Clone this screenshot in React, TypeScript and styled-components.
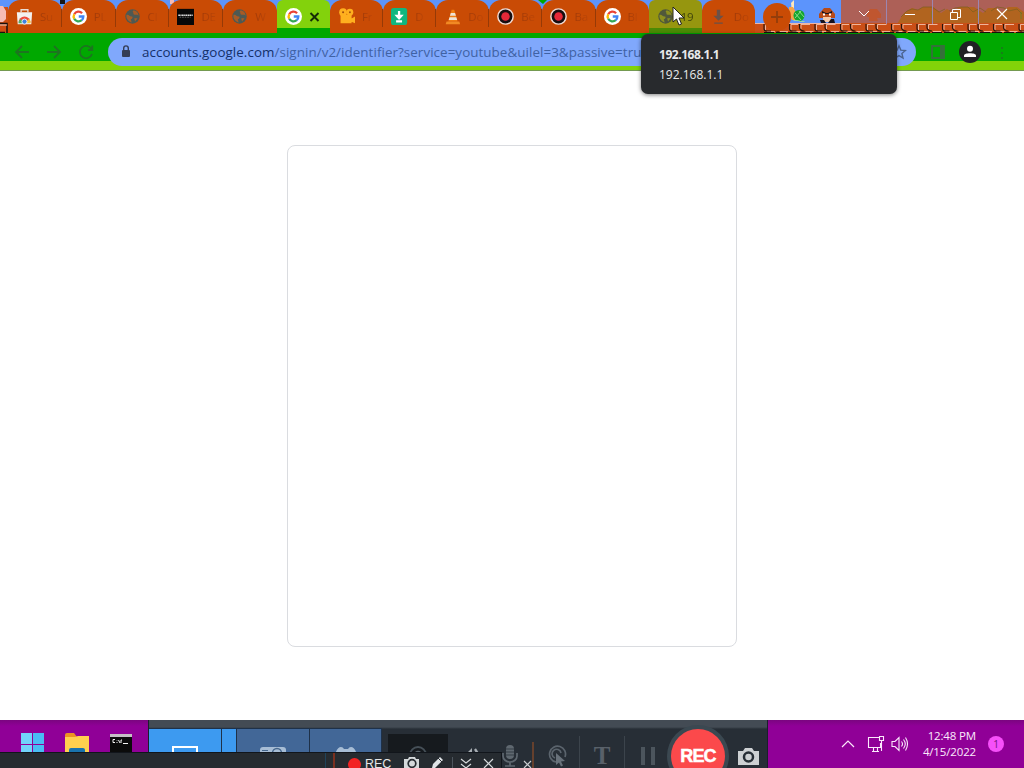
import React from "react";
import styled, { createGlobalStyle } from "styled-components";

const Global = createGlobalStyle`
  * { box-sizing: border-box; }
  body { margin: 0; overflow: hidden; font-family: "Open Sans", "Noto Sans", sans-serif; }
`;

const Screen = styled.div`
  position: relative;
  width: 1024px;
  height: 768px;
  overflow: hidden;
  display: flex;
  flex-direction: column;
  background: #fff;
`;

/* ---------- browser frame ---------- */
const TabStrip = styled.header`
  position: relative;
  flex: none;
  height: 33px;
  display: flex;
  background: #5c94fc;
`;
const Scenery = styled.svg`
  position: absolute;
  inset: 0;
`;
const Tabs = styled.div`
  position: relative;
  display: flex;
  width: 755px;
  padding-left: 8px;
`;
type Kind = "plain" | "active" | "hover";
const fills: Record<Kind, string> = {
  plain: "#c94b05",
  active: "linear-gradient(#83d20c 28px, #00a800 28px)",
  hover: "linear-gradient(#96960f 28px, #4b8a05 28px)",
};
const Tab = styled.div<{ $kind: Kind; $line: boolean; $w: number }>`
  position: relative;
  flex: none;
  width: ${(p) => p.$w}px;
  height: 33px;
  display: flex;
  align-items: center;
  gap: 7px;
  padding-left: 8px;
  white-space: nowrap;
  border-radius: ${(p) => (p.$kind === "plain" ? "12px 12px 0 0" : "6px 6px 0 0")};
  background: ${(p) => fills[p.$kind]};
  &::after {
    content: "";
    display: ${(p) => (p.$line ? "block" : "none")};
    position: absolute;
    right: 0;
    top: 9px;
    width: 1px;
    height: 18px;
    background: #963a07;
  }
`;
const Favicon = styled.svg`
  flex: none;
  width: 17px;
  height: 17px;
`;
const TabTitle = styled.span<{ $strong?: boolean }>`
  font-size: 11.5px;
  letter-spacing: -0.2px;
  line-height: 16px;
  color: transparent;
  background: ${(p) => (p.$strong ? "#3f430b" : "linear-gradient(90deg, #9f3a09, #bd4607)")};
  background-clip: text;
  -webkit-background-clip: text;
`;
const NewTab = styled.div`
  position: relative;
  display: grid;
  place-items: center;
  width: 28px;
  height: 28px;
  margin: 3px 0 0 8px;
  border-radius: 50%;
  background: #c94b05;
`;
const WindowButtons = styled.div`
  position: relative;
  display: flex;
  width: 183px;
  height: 24px;
  margin-left: auto;
`;
const WindowButton = styled.div<{ $w: number }>`
  width: ${(p) => p.$w}px;
  display: grid;
  place-items: center;
  padding-top: 4px;
  border-right: 1px solid #9c86b0;
  &:last-child { border: 0; }
`;

const Toolbar = styled.nav`
  flex: none;
  height: 38px;
  display: flex;
  align-items: center;
  border-bottom: 1px solid #749a51;
  background: linear-gradient(#00a800 28px, #82d309 28px);
`;
const NavButtons = styled.div`
  display: flex;
  width: 108px;
  padding-left: 14px;
  gap: 16px;
`;
const AddressBar = styled.div`
  width: 808px;
  height: 28px;
  display: flex;
  align-items: center;
  padding: 0 9px 0 12px;
  border-radius: 14px;
  background: #80a8fc;
`;
const Url = styled.div`
  flex: 1;
  margin-left: 10px;
  white-space: nowrap;
  font-size: 13.4px;
  letter-spacing: 0.06px;
  line-height: 20px;
  color: #3f62a4;
  b { font-weight: 400; color: #13306a; }
`;
const ToolbarEnd = styled.div`
  display: flex;
  align-items: center;
  margin-left: 14px;
  gap: 13px;
`;

const Tooltip = styled.div`
  position: absolute;
  left: 641px;
  top: 34px;
  width: 256px;
  height: 60px;
  padding: 11px 18px;
  border-radius: 7px;
  background: #282a2d;
  box-shadow: 0 1px 4px rgba(0, 0, 0, 0.5);
  color: #e8e9eb;
  font-size: 12px;
  line-height: 20px;
  strong { display: block; font-weight: 700; letter-spacing: -0.45px; }
`;
const Pointer = styled.svg`
  position: absolute;
  left: 672px;
  top: 6px;
`;

/* ---------- page ---------- */
const Page = styled.main`
  flex: 1;
  display: flex;
  justify-content: center;
  align-items: flex-start;
  padding-top: 74px;
`;
const LoginCard = styled.section`
  width: 450px;
  height: 502px;
  border: 1px solid #dadce0;
  border-radius: 8px;
`;

/* ---------- taskbar ---------- */
const Taskbar = styled.footer`
  flex: none;
  height: 48px;
  display: flex;
  background: linear-gradient(#7b0580, #900097 6px);
`;
const Launchers = styled.div`
  flex: none;
  width: 148px;
  display: flex;
  padding: 13px 0 0 21px;
  gap: 21px;
`;
const Recorder = styled.div`
  flex: none;
  width: 620px;
  display: flex;
  border: solid #19202b;
  border-width: 0 1px;
  background: linear-gradient(#434b54 7px, #272e36 9px);
`;
const Mode = styled.div<{ $w: number; $on?: boolean }>`
  flex: none;
  width: ${(p) => p.$w}px;
  height: 40px;
  margin-top: 8px;
  display: flex;
  justify-content: center;
  padding-top: 17px;
  border: solid #1e3149;
  border-width: 1px 1px 0 0;
  background: ${(p) => (p.$on ? "#3d9af0" : "#426797")};
`;
const WebcamSlot = styled.div`
  flex: none;
  width: 60px;
  height: 35px;
  margin: 14px 0 0 6px;
  padding-top: 11px;
  display: flex;
  justify-content: center;
  background: #161a1e;
`;
const Tool = styled.div<{ $w: number; $line?: boolean }>`
  flex: none;
  width: ${(p) => p.$w}px;
  height: 32px;
  margin-top: 16px;
  display: flex;
  align-items: center;
  justify-content: center;
  padding-top: 7px;
  border-right: ${(p) => (p.$line ? "1px solid #3c444c" : "0")};
  font: 700 25px/30px "Liberation Serif", serif;
  color: #59616a;
`;
const RecordButton = styled.div`
  flex: none;
  width: 54px;
  height: 54px;
  margin: 9px 0 0;
  display: grid;
  place-items: center;
  border-radius: 50%;
  background: #fb494b;
  box-shadow: 0 0 0 4px #3b4851;
  font: 700 18px/24px "Liberation Sans", sans-serif;
  -webkit-text-stroke: 0.5px #fff;
  letter-spacing: -0.9px;
  color: #fff;
`;
const Tray = styled.div`
  flex: 1;
  display: flex;
  align-items: center;
  padding-left: 73px;
  color: #fbe9fc;
`;
const DisplayIcon = styled.svg`
  margin-left: 12px;
`;
const SpeakerIcon = styled.svg`
  margin-left: 6px;
`;
const Clock = styled.div`
  width: 56px;
  margin-left: 11px;
  text-align: right;
  white-space: nowrap;
  font-size: 11.5px;
  letter-spacing: -0.15px;
  line-height: 16px;
`;
const Notice = styled.div`
  width: 16px;
  height: 16px;
  margin-left: 12px;
  border-radius: 50%;
  background: #f650f9;
  color: #74127a;
  font-size: 10px;
  line-height: 16px;
  text-align: center;
`;
const MiniBar = styled.div`
  position: absolute;
  left: 0;
  top: 752px;
  width: 502px;
  height: 16px;
  display: flex;
  align-items: flex-start;
  padding-left: 325px;
  border: solid #11151b;
  border-width: 1px 1px 0 0;
  background: #262b30;
`;
const MiniGrip = styled.div`
  width: 10px;
  height: 15px;
  margin-right: 13px;
  border-left: 1px solid #20435a;
  border-right: 2px solid #7b3020;
`;
const MiniDot = styled.div`
  width: 13px;
  height: 13px;
  margin-top: 5px;
  border-radius: 50%;
  background: #f22323;
`;
const MiniLabel = styled.div`
  width: 39px;
  margin: 4px 0 0 4px;
  font: 12.5px/14px "Liberation Sans", sans-serif;
  color: #e5e6e7;
`;
const PenOff = styled.svg`
  position: absolute;
  left: 523px;
  top: 760px;
`;

const G = () => (
  <>
    <circle cx="10" cy="10" r="10" fill="#fff" />
    <g fill="none" strokeWidth="2.7">
      <path d="M14.2 6.2A5.7 5.7 0 0 0 5 7.3" stroke="#ea4335" />
      <path d="M5 7.3a5.7 5.7 0 0 0 0 5.4" stroke="#fbbc05" />
      <path d="M5 12.7a5.7 5.7 0 0 0 8.8 1.7" stroke="#34a853" />
      <path d="M13.8 14.4a5.7 5.7 0 0 0 1.9-4.4H10.3" stroke="#4285f4" />
    </g>
  </>
);
const Globe = () => (
  <>
    <circle cx="10" cy="10" r="8.5" fill="#4d5953" />
    <path d="M3 8c3-1 3 2 6 2 2 0 1 3-1 3l1 4C5 16 2 12 3 8zM11 3c-2 2 1 2 0 4 2 2 4 0 6 2 0-4-3-6-6-6zM12 12h4l-3 4z" fill="#a65b26" />
  </>
);
const HoverGlobe = () => (
  <>
    <circle cx="10" cy="10" r="8.5" fill="#50583a" />
    <path d="M3 8c3-1 3 2 6 2 2 0 1 3-1 3l1 4C5 16 2 12 3 8zM11 3c-2 2 1 2 0 4 2 2 4 0 6 2 0-4-3-6-6-6zM12 12h4l-3 4z" fill="#8c9020" />
  </>
);
const icons: Record<string, React.ReactNode> = {
  store: (
    <>
      <path d="M6 5V2h8v3" fill="none" stroke="#e8dcd5" strokeWidth="1.6" />
      <path d="M1 5h18l-1 14H2z" fill="#f3f1ef" />
      <path d="M3 17a7 7 0 0 1 14 0z" fill="#ed4b3c" />
      <path d="M3 18a7 7 0 0 1 2-5l5 5z" fill="#4caf68" />
      <path d="M11 18l4-5q3 2 2 5z" fill="#f3c43a" />
      <circle cx="10" cy="16" r="3" fill="#3e82e0" stroke="#fff" />
    </>
  ),
  google: <G />,
  globe: <Globe />,
  hoverGlobe: <HoverGlobe />,
  black: (
    <>
      <rect width="20" height="19" y="1" fill="#080808" />
      <path d="M1.500 8.500h17" stroke="#d9d9d9" strokeWidth="1.600" strokeDasharray="2 .5 1.500 .4" />
      <path d="M3 10.800h13" stroke="#777" strokeWidth="1" strokeDasharray="2 1" />
    </>
  ),
  camera: (
    <g fill="#ffb01f">
      <circle cx="6" cy="5" r="4.6" /><circle cx="14" cy="5" r="4" />
      <path d="M3 8h13v10H3zM15 13l5-3v8l-5-2z" />
      <circle cx="6" cy="5" r="1.2" fill="#a24d0b" /><circle cx="14" cy="5" r="1.1" fill="#a24d0b" />
    </g>
  ),
  save: (
    <>
      <rect width="19" height="20" rx="3" fill="#10b77f" />
      <path d="M9.500 3.500v5M6 15.800h7" fill="none" stroke="#fff" strokeWidth="2.700" />
      <path d="M4 8h11l-5.500 6z" fill="#fff" />
    </>
  ),
  cone: (
    <>
      <path d="M9 2h3l4 14H5z" fill="#ef7d13" />
      <path d="M8 6h5l1 3H7zM6.500 11h8l1 3H5.500z" fill="#eee2d8" />
      <path d="M3 16h15l1 3H2z" fill="#f18a24" />
    </>
  ),
  record: (
    <>
      <circle cx="10" cy="10" r="9" fill="#170e10" stroke="#f1dcd4" strokeWidth="1.700" />
      <circle cx="10" cy="10" r="5" fill="#e52838" />
    </>
  ),
  download: (
    <path d="M8 2h4v7h4l-6 6-6-6h4zM5 17h10v1.500H5z" fill="#6a5148" />
  ),
};

const tabs: { icon: string; title: string; kind?: Kind }[] = [
  { icon: "store", title: "Su" },
  { icon: "google", title: "PL" },
  { icon: "globe", title: "Cl" },
  { icon: "black", title: "DE" },
  { icon: "globe", title: "W" },
  { icon: "google", title: "", kind: "active" },
  { icon: "camera", title: "Fr" },
  { icon: "save", title: "D" },
  { icon: "cone", title: "Do" },
  { icon: "record", title: "Be" },
  { icon: "record", title: "Ba" },
  { icon: "google", title: "Bl" },
  { icon: "hoverGlobe", title: "19", kind: "hover" },
  { icon: "download", title: "Do" },
];

const bricks = Array.from({ length: 11 }, (_, i) => 764 + i * 25.5);

const FrameScenery = () => (
  <Scenery width="1024" height="33">
    <rect x="0" y="7" width="8" height="26" fill="#ce4d12" />
    <path d="M0 6h3l3 5v8l-3 3H0z" fill="#f6bbb5" />
    <path d="M0 23.500h7V33M0 32.500h5" stroke="#17100d" strokeWidth="1.500" fill="none" />
    <path d="M0 25h7" stroke="#f1cfc4" />
    <rect x="60" width="5" height="4" fill="#171717" />
    <rect x="170" width="4" height="4" fill="#f6bbb5" />
    <path d="M538 0h9l-4 4z" fill="#00a800" />
    <rect x="841" width="183" height="24" fill="#ad6057" />
    <path d="M897 24l7-11 8-5 6 2 5-3h10l8 6 6-4 5 3 8-5h14l9 6 5-5h8l6 4 6-5h9l7 5v12z" fill="#b1641f" />
    <g fill="none" stroke="#7b5f1e" strokeOpacity=".7">
      <path d="M901 17l6-6 5-2 6 1 5-3h9l7 5 6-3M949 11l6-3 6-1h7l5 5 7-4 6 4M991 11l6-4 7 1 5 3 8-2 5 5" />
      <path d="M932 11v7M978 11v7M1021 12v7" stroke="#5b8c2b" />
    </g>
    <rect x="755" y="23" width="269" height="10" fill="#c94e16" />
    <path d="M755 23.500h86" stroke="#efb7a5" />
    {bricks.map((x) => (
      <g key={x} fill="none">
        <path d={`M${x + 1.5} 31v-6.500h7M${x + 11.5} 29v-4.500h9M${x + 3} 31.500h8m5 0h8`} stroke="#f3bfa9" strokeWidth=".9" />
        <path d={`M${x} 24v5q0 2 3 2h4M${x + 10} 24v4q1 3 5 3`} stroke="#26130c" strokeWidth="1.100" />
      </g>
    ))}
    <path d="M764 32.500h260" stroke="#17100c" strokeDasharray="10 2" />
    <path d="M791 3l3-3v8l-2 4z" fill="#ffe7ba" />
    <path d="M789 7h4l3 5v8h-4l-3-6z" fill="#f5a34a" />
    <circle cx="799" cy="15.500" r="5.500" fill="#13a52f" />
    <path d="M795 13l6 7M801 11l-6 7M799 11l5 6M793.500 20.500h5l2 1h4" stroke="#a5e8a0" strokeWidth=".8" fill="none" />
    <path d="M824 8h6l5 6v4h-16v-4z" fill="#b84b18" />
    <path d="M823 17h8v5h-8z" fill="#f5c9aa" />
    <path d="M820 20h4l2 3h-5zM831 19h3l1 4h-7zM822 11l4 2h2l4-2v2l-4 1h-2l-4-1z" fill="#17121d" />
    <path d="M823 13.500h2v2h-2zm6 0h2v2h-2z" fill="#fff" />
    <path d="M870 9h7l4 5v4h-4l1 3h-9v-4h-2v-4z" fill="#c0562f" />
  </Scenery>
);

const navStroke = { fill: "none", stroke: "#1d7420", strokeWidth: 1.8 };

export default function App() {
  return (
    <>
      <Global />
      <Screen>
        <TabStrip>
          <FrameScenery />
          <Tabs>
            {tabs.map((t, i) => (
              <Tab
                key={i}
                $kind={t.kind ?? "plain"}
                $w={i < 5 ? 53.8 : 53.1}
                $line={![4, 5, 11, 12, 13].includes(i)}
              >
                <Favicon viewBox="0 0 20 20">{icons[t.icon]}</Favicon>
                {t.kind === "active" ? (
                  <svg width="14" height="12" viewBox="2 0 14 12">
                    <path d="m3.500 2 8 8m0-8-8 8" stroke="#152c06" strokeWidth="1.900" />
                  </svg>
                ) : (
                  <TabTitle $strong={t.kind === "hover"}>{t.title}</TabTitle>
                )}
              </Tab>
            ))}
          </Tabs>
          <NewTab>
            <svg width="14" height="14"><path d="M7 1v12M1 7h12" stroke="#943d0b" strokeWidth="1.800" /></svg>
          </NewTab>
          <WindowButtons>
            <WindowButton $w={46}>
              <svg width="12" height="8"><path d="m1 1 5 5 5-5" fill="none" stroke="#fff" /></svg>
            </WindowButton>
            <WindowButton $w={46}>
              <svg width="10" height="8"><path d="M0 4.500h10" stroke="#fff" /></svg>
            </WindowButton>
            <WindowButton $w={46}>
              <svg width="11" height="11"><path d="M.5 3.500h7v7h-7zM2.500 3V.5h8v8H8" fill="none" stroke="#fff" /></svg>
            </WindowButton>
            <WindowButton $w={45}>
              <svg width="12" height="12"><path d="m1 1 10 10m0-10L1 11" stroke="#fff" strokeWidth="1.200" /></svg>
            </WindowButton>
          </WindowButtons>
        </TabStrip>

        <Toolbar>
          <NavButtons>
            <svg width="16" height="16"><path d="M15 8H2m6-6L2 8l6 6" {...navStroke} /></svg>
            <svg width="16" height="16"><path d="M1 8h13M8 2l6 6-6 6" {...navStroke} /></svg>
            <svg width="16" height="16">
              <path d="M13.500 5A6.200 6.200 0 1 0 14 10M14.300 1.500V6H10" {...navStroke} />
            </svg>
          </NavButtons>
          <AddressBar>
            <svg width="12" height="13">
              <rect x="2" y="5" width="8" height="7" rx="1" fill="#343e55" />
              <path d="M3.700 5V3.200a2.300 2.300 0 0 1 4.600 0V5" fill="none" stroke="#343e55" strokeWidth="1.400" />
            </svg>
            <Url><b>accounts.google.com</b>/signin/v2/identifier?service=youtube&amp;uilel=3&amp;passive=true</Url>
            <svg width="16" height="16" viewBox="0 0 16 16">
              <path d="m8 1.800 1.800 4.300 4.600.4-3.500 3 1.100 4.600L8 11.600l-4 2.500 1.100-4.600-3.500-3 4.600-.4z" fill="none" stroke="#4b638f" strokeWidth="1.400" />
            </svg>
          </AddressBar>
          <ToolbarEnd>
            <svg width="16" height="14"><path d="M2 1h12v12H2z" fill="none" stroke="#35703a" strokeWidth="1.800" /><path d="M10 1h4v12h-4z" fill="#35703a" /></svg>
            <svg width="22" height="22">
              <circle cx="11" cy="11" r="11" fill="#202124" />
              <circle cx="11" cy="7.800" r="3" fill="#fff" />
              <path d="M5 16v-1.500c0-3 12-3 12 0V16z" fill="#fff" />
            </svg>
            <svg width="16" height="16"><path d="M8 3v2m0 3v2m0 3v2" stroke="#168017" strokeWidth="2" /></svg>
          </ToolbarEnd>
        </Toolbar>

        <Page><LoginCard /></Page>

        <Taskbar>
          <Launchers>
            <svg width="23" height="24">
              <path d="M0 0h11v11H0zM12 0h11v11H12zM0 12h11v11H0zM12 12h11v11H12z" fill="#49bdf4" />
              <path d="M0 0h11v11H0zM0 12h11v11H0z" fill="#72d3fa" />
            </svg>
            <svg width="24" height="24">
              <path d="M0 2q0-2 2-2h7l3 4H0z" fill="#ed9322" />
              <path d="M0 4h10l3-1h11v21H0z" fill="#ffd04e" />
              <path d="M4 17q0-2 2-2h12q2 0 2 2v7H4z" fill="#1973ad" />
            </svg>
            <svg width="22" height="24">
              <path d="M0 2h22v22H0z" fill="#0b0b0b" /><path d="M0 1h22v3H0z" fill="#c5c0c5" />
              <path d="M5 6.500H3v3h2m2-2v.5m0 1v1m1.500-3 1.500 3m1-3v3m0-3h1M13 10.500h5" fill="none" stroke="#f5f5f5" />
            </svg>
          </Launchers>
          <Recorder>
            <Mode $w={73} $on><svg width="26" height="18"><path d="M1 16V1h24v15" fill="none" stroke="#fff" strokeWidth="2" /></svg></Mode>
            <Mode $w={15} $on />
            <Mode $w={73}>
              <svg width="26" height="18"><rect y="1" width="26" height="17" rx="3" fill="#a7bdd5" /><circle cx="17" cy="7" r="4.500" fill="none" stroke="#46678c" strokeWidth="1.500" /><path d="M2 4.500h6" stroke="#46678c" /></svg>
            </Mode>
            <Mode $w={72}>
              <svg width="24" height="18"><path d="M0 18C0 8 3 1 7 1q2 0 3 2h4q1-2 3-2c4 0 7 7 7 17z" fill="#a7bdd5" /><path d="M7 6v6M4 9h6" stroke="#426797" strokeWidth="1.500" /></svg>
            </Mode>
            <WebcamSlot>
              <svg width="20" height="20"><circle cx="10" cy="10" r="8" fill="none" stroke="#465058" strokeWidth="1.800" /><circle cx="10" cy="10" r="3.500" fill="none" stroke="#596269" strokeWidth="1.500" /></svg>
            </WebcamSlot>
            <Tool $w={48}>
              <svg width="20" height="20"><path d="M1 7h4l5-5v16l-5-5H1z" fill="#a7adb2" /><path d="M13 3q5 6 0 13" fill="none" stroke="#a7adb2" strokeWidth="2.500" /></svg>
            </Tool>
            <Tool $w={41}>
              <svg width="20" height="23"><rect x="6" y="1" width="8" height="14" rx="4" fill="#5f6870" /><path d="M3 9v3a7 6 0 0 0 14 0V9M10 18v4M5 22h10" fill="none" stroke="#5f6870" strokeWidth="1.700" /><path d="M6 5h8M6 8h8M6 11h8" stroke="#353d44" /></svg>
              <svg width="14" height="28"><path d="M13 0v28" stroke="#65402d" strokeWidth="2" /></svg>
            </Tool>
            <Tool $w={43} $line>
              <svg width="20" height="22"><g fill="none" stroke="#5b646d" strokeWidth="1.700"><path d="M8 17A8 8 0 1 1 17 12M7 13a4.500 4.500 0 1 1 6-5" /></g><path d="m8 8 9 8-4 .5 2 4-2 1-2-4-3 2.500z" fill="#68717a" /></svg>
            </Tool>
            <Tool $w={45} $line>T</Tool>
            <Tool $w={46}>
              <svg width="18" height="20"><path d="M4 1v18M14 1v18" stroke="#4c555d" strokeWidth="4" /></svg>
            </Tool>
            <RecordButton>REC</RecordButton>
            <Tool $w={47}>
              <svg width="21" height="18"><path d="M0 4h5l2-3h7l2 3h5v14H0z" fill="#cdd0d3" /><circle cx="10.500" cy="10" r="4.500" fill="none" stroke="#272e36" strokeWidth="2.500" /></svg>
            </Tool>
          </Recorder>
          <Tray>
            <svg width="14" height="9"><path d="m1 7 6-6 6 6" fill="none" stroke="currentColor" strokeWidth="1.200" /></svg>
            <DisplayIcon width="18" height="18">
              <path d="M12 2.500H1.500v10h12V8M5 16.500h7M6.500 13v3m4-3v3M12.500 1.500h4v4h-4zm2 4V16" fill="none" stroke="currentColor" strokeWidth="1.100" />
            </DisplayIcon>
            <SpeakerIcon width="18" height="16">
              <path d="M1 5.500h3l4-4v13l-4-4H1zM10.500 5.500q2 2.500 0 5M12.500 3.500q3.500 4.500 0 9M14.500 1.500q4 6.500 0 13" fill="none" stroke="currentColor" strokeWidth="1.100" />
            </SpeakerIcon>
            <Clock>12:48 PM<br />4/15/2022</Clock>
            <Notice>1</Notice>
          </Tray>
        </Taskbar>

        <MiniBar>
          <MiniGrip /><MiniDot /><MiniLabel>REC</MiniLabel>
          <svg width="98" height="15">
            <path d="M0 6h4l1-2h6l1 2h3v10H0z" fill="#d5d9db" /><circle cx="8" cy="10.500" r="3.800" fill="none" stroke="#262b30" strokeWidth="1.700" />
            <path d="m28 15 1-4 7-7 3 3-8 8z" fill="#dfe3e6" /><path d="m34 5 4 4" stroke="#262b30" />
            <path d="M48.500 4v12" stroke="#4d555d" />
            <path d="m57 6 5 4 5-4m-10 5 5 4 5-4m13-5 9 9m0-9-9 9" fill="none" stroke="#d5d9db" strokeWidth="1.200" />
          </svg>
        </MiniBar>
        <PenOff width="10" height="8"><path d="m1 1 7 7m0-7-7 7" stroke="#c9cdd0" strokeWidth="1.200" /></PenOff>

        <Tooltip><strong>192.168.1.1</strong>192.168.1.1</Tooltip>
        <Pointer width="14" height="20"><path d="M1 1v15l3.500-3 2.500 6 2.500-1-2.500-6h5z" fill="#fff" stroke="#222" /></Pointer>
      </Screen>
    </>
  );
}
